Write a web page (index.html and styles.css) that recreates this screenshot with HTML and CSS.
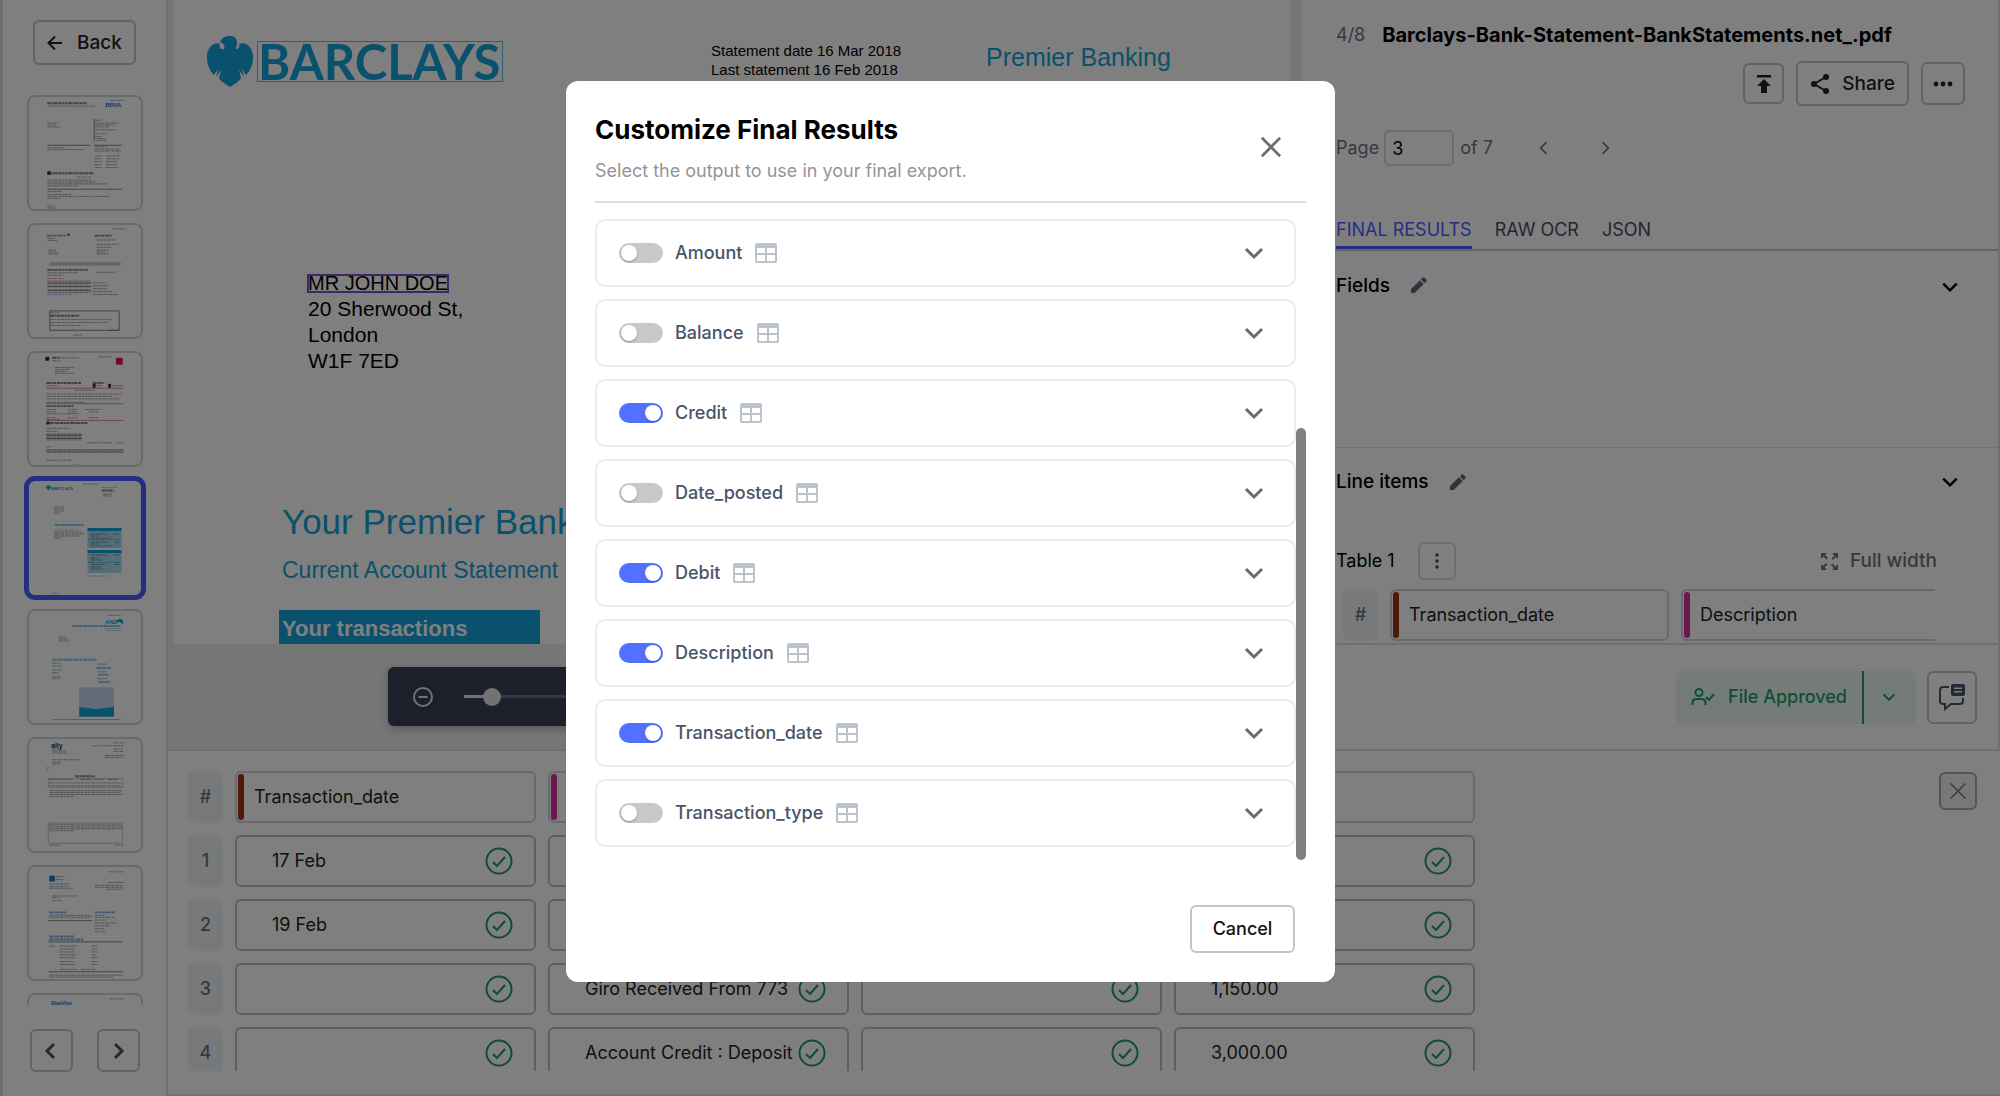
FILE: index.html
```html
<!DOCTYPE html>
<html lang="en">

<head>
    <meta charset="UTF-8">
    <meta name="viewport" content="width=device-width, initial-scale=1.0">
    <title>Customize Final Results</title>

    <link rel="stylesheet" href="styles.css">
</head>

<body>

    <!-- Shared icons -->
    <svg class="sprite" aria-hidden="true">
        <symbol id="i-left" viewBox="0 0 24 24"><path d="M15 5l-7 7 7 7" /></symbol>
        <symbol id="i-right" viewBox="0 0 24 24"><path d="M9 5l7 7-7 7" /></symbol>
        <symbol id="i-down" viewBox="0 0 24 24"><path d="M4 8l8 8 8-8" /></symbol>
        <symbol id="i-close" viewBox="0 0 24 24"><path d="M2 2l20 20M22 2L2 22" /></symbol>
        <symbol id="i-check" viewBox="0 0 28 28"><circle cx="14" cy="14" r="12.5" /><path d="M8 15l4 4 8-9" /></symbol>
        <symbol id="i-table" viewBox="0 0 22 20"><path fill-rule="evenodd" d="M2 0h18a2 2 0 0 1 2 2v16a2 2 0 0 1-2 2H2a2 2 0 0 1-2-2V2a2 2 0 0 1 2-2zM2 5v5h8V5zM12 5v5h8V5zM2 12v6h8v-6zM12 12v6h8v-6z" /></symbol>
        <symbol id="i-pencil" viewBox="0 0 18 18"><path d="M1 17v-4L10.500 3.500l4 4L5 17zM11.500 2.500l2-2q.8-.6 1.600 0l2.400 2.400q.6.800 0 1.600l-2 2z" /></symbol>
    </svg>

    <div class="app">

        <aside class="sidebar">
            <button class="btn back">
                <svg class="stroke" width="16" height="16" viewBox="0 0 16 16"><path d="M15 8H2M8 1.500L1.500 8 8 14.500" /></svg>
                Back
            </button>

            <div class="thumbs">
                <div class="thumb">
                    <svg viewBox="0 0 116 116">
                        <path class="t bold" d="M19 6.500h41M19 79h48" />
                        <text class="brand blue" x="79" y="10" font-size="6">BBVA</text>
                        <path class="t" d="M84 3.500h14M19 9.500h50M19 27h10M19 29h9M19 31h13M68 24h8M68 27h25M69 29h20M68 31h15M69 34h21M68 38h12M68 41h8M70 43h9M70 45h11M19 52.500h17M19 54.500h38M68 51.500h12M68 54h26M68 56h27M68 61h8M80 61h14M68 64h7M80 64h13M68 67h8M80 67h12M68 70h7M80 70h12M68 73h8M80 73h12M50 83h14M19 86h46M19 88h50M19 90h62M19 92h32M19 98h15M19 101h24M19 103h64M19 105h13M19 113h7M19 115h9" />
                        <path class="line" d="M67.500 23v23M19 50h44M67 50h29M19 95.500h77" />
                        <rect x="19" y="77" width="3.500" height="3.500" />
                    </svg>
                </div>
                <div class="thumb">
                    <svg viewBox="0 0 116 116">
                        <path class="t bold blue" d="M18 11h20" />
                        <path class="red" d="M39 9h4l-2 3z" />
                        <path class="t bold" d="M68 11h18M19 46.500h42M22 94h30" />
                        <path class="t" d="M86 4h13M19 14h8M19 16h11M20 26h8M20 28h9M20 30h11M70 15.500h20M70 20h23M70 23h15M70 26h13M70 28h9M70 30h12M19 49.500h32M69 49h20M19 52h16M19 58h45M19 61h45M19 64h45M19 67h45M19 70h45M66 60h13M66 63h17M66 66h15M66 69h20M66 72h26M22 91h10M22 98h64M22 101h60M22 104h32M82 109h12M46 114h9" />
                        <path class="t red" d="M19 55.500h18" />
                        <path class="t blue" d="M19 72h25" />
                        <path class="line" d="M19 60h45M19 63.500h45M19 68h45M21.500 89h72v20h-72z" />
                        <rect class="shade" x="21" y="38.500" width="74" height="3.500" />
                    </svg>
                </div>
                <div class="thumb">
                    <svg viewBox="0 0 116 116">
                        <rect x="17" y="4" width="4" height="4" />
                        <rect class="redfill" x="90" y="5" width="7" height="7" />
                        <path class="t bold" d="M24 5h8M18 31h36M66 31h12M18 55h28M21 72.500h40" />
                        <path class="t" d="M33 5h19M24 8h8M72 4h14M27 15h20M27 17h15M27 19h12M27 21h20M18 34h13M70 34h6M86 34h12M48 38.500h20M18 42.500h78M18 45h68M18 47.500h76M18 51h40M18 58.500h10M40 58.500h10M58 58.500h16M18 61h10M40 61h10M62 61h10M18 63h34M18 67h10M40 67h10M62 67h10M18 69h14M18 78h24M18 81h12M18 84h36M18 86h36M18 88h36M18 90h36M60 93h26M90 93h8M18 97h5M18 100h80M18 103h80M18 111h26M46 116h8" />
                        <path class="line red" d="M18 36.500h80M18 52.500h80M18 69.800h80" />
                        <path class="line" d="M18 85h37M18 88.500h37M18 101.500h80" />
                        <rect x="66" y="32" width="3" height="4" /><rect x="82" y="32" width="3" height="4" /><rect x="18" y="71" width="3" height="3" />
                    </svg>
                </div>
                <div class="thumb selected">
                    <svg viewBox="0 0 116 116">
                        <circle class="cyanfill" cx="21.500" cy="7.500" r="2.200" />
                        <text class="brand cyan" x="24" y="9.500" font-size="4">BARCLAYS</text>
                        <path class="t" d="M56 4h16M76 14h9M76 16h8M27 27h10M27 29h11M27 31h10M27 33h6M27 52h28M27 54h30M27 56h26M27 58h8" />
                        <path class="t bold" d="M75 10.500h12" />
                        <path class="t cyan" d="M75 7.500h15M26 50h25M61 96h20M25 113h7" />
                        <path class="t bold cyan" d="M28 45h29" />
                        <path class="cyantint" d="M60.500 48h34v20h-34zM60.500 70h34v23h-34z" />
                        <path class="cyanfill" d="M60.500 48h34v3h-34zM60.500 70h34v3h-34zM60.500 59.500h34v.6h-34zM60.500 82h34v.6h-34z" />
                        <path class="t" d="M64 54h16M86 54h7M64 56h8M64 58h20M64 62h17M88 62h5M64 64h8M64 66h20M64 75h18M87 75h6M64 78h8M64 80h12M64 84.500h14M88 84.500h5M64 87h10M64 89h12" />
                    </svg>
                </div>
                <div class="thumb">
                    <svg viewBox="0 0 116 116">
                        <text class="brand cyan" x="79" y="13" font-size="6">ANZ</text>
                        <path class="cyanfill" d="M91 13q-1-4 3-5 5 1 3 6l-3-3z" />
                        <path class="t" d="M82 4.500h13M31 27h7M31 29h9M31 31h11M24 54h8M24 57h9M24 61h11M24 64h7M24 68h9M24 70h8M71 55h10M71 63h9M71 70h10" />
                        <path class="t bold cyan" d="M45 15.500h50M24 50.500h46M70 59h15M72 66h11M72 73.500h12" />
                        <path class="t cyan" d="M78 18h17M80 20h15" />
                        <rect class="sky" x="52" y="79" width="36" height="22" />
                        <path class="cyanfill" d="M52 99.500l18 2 18-2v10H52z" />
                        <path class="line cyan" d="M24 112.500h71" />
                    </svg>
                </div>
                <div class="thumb">
                    <svg viewBox="0 0 116 116">
                        <text class="brand" x="23" y="9" font-size="7">ally</text>
                        <path class="t" d="M87 4h12M66 7h32M24 10.500h10M24 12.500h14M24 14.500h15M88 10.500h9M87 13h11M79 17h20M78 19h20M24 21.500h28M24 24h9M24 26h8M21 42h24M53 42h12M68 42h9M82 42h10M21 45.500h74M21 48.500h74M21 53.500h76M21 55.500h74M21 57.500h77M21 59.500h26M21 89h75M21 91h76M21 93h75M21 95h26M21 110h12M88 110h10" />
                        <path class="t bold" d="M48 38.500h20" />
                        <path class="line faint" d="M20 41h77v9H20zM20 87h77v21H20zM19.500 28v5" />
                    </svg>
                </div>
                <div class="thumb">
                    <svg viewBox="0 0 116 116">
                        <rect class="bluefill" x="21" y="9" width="6" height="6" />
                        <path class="t" d="M83 5h15M28 10h9M28 13h8M21 17.500h22M21 20h20M21 22h24M82 16h16M68 19h30M68 21h29M80 23h18M24 30h26M24 32h8M24 35h10M21 50h44M21 52h44M68 50h10M68 52h22M68 55h12M68 58h23M68 61h15M68 64h11M68 67h12M21 82h6M32 82h18M65 82h6M32 85h15M65 85h6M32 88h16M65 88h6M32 91h17M65 91h5M32 94h16M65 94h6M32 98h14M65 98h6M32 101h16M65 101h6M32 106h18M54 106h15M21 112h76M21 114h66" />
                        <path class="t bold blue" d="M21 47h18M68 47h21M21 72h26M21 75h35" />
                        <path class="line" d="M20 55.500h45M20 77.500h77M20 108.500h77" />
                    </svg>
                </div>
                <div class="thumb">
                    <svg viewBox="0 0 116 116">
                        <path class="t" d="M83 4h15" />
                        <text class="brand blue" x="23" y="10" font-size="5">BlueVine</text>
                    </svg>
                </div>
            </div>

            <div class="pager">
                <button class="btn" aria-label="Previous files"><svg class="stroke slate" width="24" height="24"><use href="#i-left" /></svg></button>
                <button class="btn" aria-label="Next files"><svg class="stroke slate" width="24" height="24"><use href="#i-right" /></svg></button>
            </div>
        </aside>

        <div class="workspace">

            <div class="top">

                <main class="viewer">
                    <div class="page">
                        <div class="page-head">
                            <div class="bank">
                                <svg width="46" height="52" viewBox="0 0 46 52"><path d="M22 0c5-.5 8 2 8 7 0 2-1 4-1 6 3-.5 4-2 3-5 7-3 13 3 14 11 .5 8-2 15-7 20l-4-6 2 8-5-7 2 8q-1 3-11 9-10-6-11-9l2-8-5 7 2-8-4 6C2 34-.5 27 0 19 1 11 7 5 13 8c-1 4 1 6 4 5 1-3 0-5-2-6l-2-1q2-6 9-6z" /></svg>
                                <span class="bank-name">BARCLAYS</span>
                            </div>
                            <p class="dates">Statement date 16 Mar 2018<br>Last statement 16 Feb 2018</p>
                            <p class="tier">Premier Banking</p>
                        </div>
                        <p class="address"><span class="marked">MR JOHN DOE</span><br>20 Sherwood St,<br>London<br>W1F 7ED</p>
                        <div class="account">
                            <h1>Your Premier Bank</h1>
                            <h2>Current Account Statement</h2>
                            <h3>Your transactions</h3>
                        </div>
                    </div>
                    <div class="viewer-foot">
                        <div class="zoombar">
                            <button class="plain" aria-label="Zoom out"><svg class="stroke" width="22" height="22" viewBox="0 0 22 22"><circle cx="11" cy="11" r="9" /><path d="M6.500 11h9" /></svg></button>
                            <input class="zoom" type="range" min="0" max="100" value="5" aria-label="Zoom">
                        </div>
                    </div>
                </main>

                <section class="panel">
                    <div class="panel-body">
                        <div class="file-name"><span>4/8</span><strong>Barclays-Bank-Statement-BankStatements.net_.pdf</strong></div>
                        <div class="actions">
                            <button class="btn up" aria-label="Upload"><svg width="18" height="20" viewBox="0 0 18 20"><path d="M2 1h14v2.500H2zM9 5l7 7h-4v7H6v-7H2z" /></svg></button>
                            <button class="btn share">
                                <svg width="20" height="22" viewBox="0 0 20 22"><circle cx="4" cy="11" r="3" /><circle cx="16" cy="4" r="3" /><circle cx="16" cy="18" r="3" /><path class="rod" d="M16 4L4 11l12 7" /></svg>
                                Share
                            </button>
                            <button class="btn more" aria-label="More"><svg width="20" height="6" viewBox="0 0 20 6"><circle cx="3" cy="3" r="2.400" /><circle cx="10" cy="3" r="2.400" /><circle cx="17" cy="3" r="2.400" /></svg></button>
                        </div>
                        <div class="page-nav">
                            <label for="page">Page</label>
                            <input id="page" type="text" value="3">
                            <span>of 7</span>
                            <button class="plain prev" aria-label="Previous page"><svg class="stroke" width="20" height="20"><use href="#i-left" /></svg></button>
                            <button class="plain next" aria-label="Next page"><svg class="stroke" width="20" height="20"><use href="#i-right" /></svg></button>
                        </div>
                        <nav class="tabs">
                            <a class="active" href="#final">FINAL RESULTS</a>
                            <a href="#raw">RAW OCR</a>
                            <a href="#json">JSON</a>
                        </nav>
                        <div class="group fields">
                            <h4>Fields</h4>
                            <svg class="pencil" width="17" height="17"><use href="#i-pencil" /></svg>
                            <button class="plain" aria-label="Toggle fields"><svg class="stroke" width="20" height="20"><use href="#i-down" /></svg></button>
                        </div>
                        <div class="group items">
                            <h4>Line items</h4>
                            <svg class="pencil" width="17" height="17"><use href="#i-pencil" /></svg>
                            <button class="plain" aria-label="Toggle line items"><svg class="stroke" width="20" height="20"><use href="#i-down" /></svg></button>
                        </div>
                        <div class="table-bar">
                            <span>Table 1</span>
                            <button class="btn dots" aria-label="Table options"><svg width="4" height="16" viewBox="0 0 4 16"><circle cx="2" cy="2" r="1.700" /><circle cx="2" cy="8" r="1.700" /><circle cx="2" cy="14" r="1.700" /></svg></button>
                            <button class="plain full">
                                <svg width="17" height="17" viewBox="0 0 17 17"><path d="M0 0h6L4 2l3 3-1.500 1.500-3-3L0 6zM17 0v6l-2-2-3 3-1.500-1.500 3-3L11 0zM0 17v-6l2 2 3-3 1.500 1.500-3 3L6 17zM17 17h-6l2-2-3-3 1.500-1.500 3 3L17 11z" /></svg>
                                Full width
                            </button>
                        </div>
                        <div class="preview">
                            <table class="grid">
                                <colgroup><col class="c-num"><col class="c-prev"><col class="c-prev"></colgroup>
                                <tr>
                                    <th class="num">#</th>
                                    <th><div class="cell rust">Transaction_date</div></th>
                                    <th><div class="cell pink">Description</div></th>
                                </tr>
                            </table>
                        </div>
                    </div>
                    <div class="panel-foot">
                        <div class="approved">
                            <button class="plain">
                                <svg class="stroke" width="24" height="18" viewBox="0 0 24 18"><circle cx="8" cy="4.500" r="3.500" /><path d="M1.500 17v-2q0-4 4-4h5q4 0 4 4v2M15 9l3 3 5-6" /></svg>
                                File Approved
                            </button>
                            <button class="plain drop" aria-label="Change status"><svg class="stroke" width="16" height="16"><use href="#i-down" /></svg></button>
                        </div>
                        <button class="btn comment" aria-label="Comments">
                            <svg class="slate" width="28" height="28" viewBox="0 0 28 28"><path class="bubble" d="M11 4H5Q2 4 2 7v11q0 3 3 3h2v5l6-5h9q3 0 3-3v-3" /><path fill-rule="evenodd" d="M15 1h10q2 0 2 2v8q0 2-2 2H15q-2 0-2-2V3q0-2 2-2zM16 4.500V6h8V4.500zM16 8v1.500h8V8z" /></svg>
                        </button>
                    </div>
                </section>

            </div>

            <section class="sheet">
                <div class="sheet-table">
                    <table class="grid wide">
                        <colgroup><col class="c-num"><col><col><col><col></colgroup>
                        <tr>
                            <th class="num">#</th>
                            <th><div class="cell rust">Transaction_date</div></th>
                            <th><div class="cell pink"></div></th>
                            <th><div class="cell"></div></th>
                            <th><div class="cell"></div></th>
                        </tr>
                        <tr>
                            <th class="num">1</th>
                            <td><div class="cell"><span>17 Feb</span><svg class="ok"><use href="#i-check" /></svg></div></td>
                            <td><div class="cell"></div></td>
                            <td><div class="cell"></div></td>
                            <td><div class="cell"><span></span><svg class="ok"><use href="#i-check" /></svg></div></td>
                        </tr>
                        <tr>
                            <th class="num">2</th>
                            <td><div class="cell"><span>19 Feb</span><svg class="ok"><use href="#i-check" /></svg></div></td>
                            <td><div class="cell"></div></td>
                            <td><div class="cell"></div></td>
                            <td><div class="cell"><span></span><svg class="ok"><use href="#i-check" /></svg></div></td>
                        </tr>
                        <tr>
                            <th class="num">3</th>
                            <td><div class="cell"><span></span><svg class="ok"><use href="#i-check" /></svg></div></td>
                            <td><div class="cell"><span>Giro Received From 773</span><svg class="ok"><use href="#i-check" /></svg></div></td>
                            <td><div class="cell"><span></span><svg class="ok"><use href="#i-check" /></svg></div></td>
                            <td><div class="cell"><span>1,150.00</span><svg class="ok"><use href="#i-check" /></svg></div></td>
                        </tr>
                        <tr>
                            <th class="num">4</th>
                            <td><div class="cell"><span></span><svg class="ok"><use href="#i-check" /></svg></div></td>
                            <td><div class="cell"><span>Account Credit : Deposit</span><svg class="ok"><use href="#i-check" /></svg></div></td>
                            <td><div class="cell"><span></span><svg class="ok"><use href="#i-check" /></svg></div></td>
                            <td><div class="cell"><span>3,000.00</span><svg class="ok"><use href="#i-check" /></svg></div></td>
                        </tr>
                    </table>
                </div>
                <button class="btn shut" aria-label="Close table"><svg class="stroke" width="18" height="18"><use href="#i-close" /></svg></button>
            </section>

        </div>
    </div>

    <div class="overlay">
        <div class="modal" role="dialog" aria-labelledby="modal-title">
            <div class="modal-head">
                <div>
                    <h2 id="modal-title">Customize Final Results</h2>
                    <p>Select the output to use in your final export.</p>
                </div>
                <button class="plain" aria-label="Close"><svg class="stroke" width="22" height="22"><use href="#i-close" /></svg></button>
            </div>

            <div class="modal-body">
                <div class="list">
                    <div class="option">
                        <input type="checkbox" id="amount"><label for="amount">Amount</label>
                        <svg class="kind"><use href="#i-table" /></svg>
                        <button class="plain" aria-label="Expand Amount"><svg class="stroke" width="24" height="24"><use href="#i-down" /></svg></button>
                    </div>
                    <div class="option">
                        <input type="checkbox" id="balance"><label for="balance">Balance</label>
                        <svg class="kind"><use href="#i-table" /></svg>
                        <button class="plain" aria-label="Expand Balance"><svg class="stroke" width="24" height="24"><use href="#i-down" /></svg></button>
                    </div>
                    <div class="option">
                        <input type="checkbox" id="credit" checked><label for="credit">Credit</label>
                        <svg class="kind"><use href="#i-table" /></svg>
                        <button class="plain" aria-label="Expand Credit"><svg class="stroke" width="24" height="24"><use href="#i-down" /></svg></button>
                    </div>
                    <div class="option">
                        <input type="checkbox" id="date_posted"><label for="date_posted">Date_posted</label>
                        <svg class="kind"><use href="#i-table" /></svg>
                        <button class="plain" aria-label="Expand Date_posted"><svg class="stroke" width="24" height="24"><use href="#i-down" /></svg></button>
                    </div>
                    <div class="option">
                        <input type="checkbox" id="debit" checked><label for="debit">Debit</label>
                        <svg class="kind"><use href="#i-table" /></svg>
                        <button class="plain" aria-label="Expand Debit"><svg class="stroke" width="24" height="24"><use href="#i-down" /></svg></button>
                    </div>
                    <div class="option">
                        <input type="checkbox" id="description" checked><label for="description">Description</label>
                        <svg class="kind"><use href="#i-table" /></svg>
                        <button class="plain" aria-label="Expand Description"><svg class="stroke" width="24" height="24"><use href="#i-down" /></svg></button>
                    </div>
                    <div class="option">
                        <input type="checkbox" id="transaction_date" checked><label for="transaction_date">Transaction_date</label>
                        <svg class="kind"><use href="#i-table" /></svg>
                        <button class="plain" aria-label="Expand Transaction_date"><svg class="stroke" width="24" height="24"><use href="#i-down" /></svg></button>
                    </div>
                    <div class="option">
                        <input type="checkbox" id="transaction_type"><label for="transaction_type">Transaction_type</label>
                        <svg class="kind"><use href="#i-table" /></svg>
                        <button class="plain" aria-label="Expand Transaction_type"><svg class="stroke" width="24" height="24"><use href="#i-down" /></svg></button>
                    </div>
                </div>
                <div class="scrollbar"></div>
            </div>

            <div class="modal-foot">
                <button class="btn">Cancel</button>
            </div>
        </div>
    </div>

</body>

</html>
```

FILE: styles.css
```css
* {
    margin: 0;
    padding: 0;
    box-sizing: border-box;
}

body {
    height: 100vh;
    overflow: hidden;
    font-family: Inter, "Liberation Sans", sans-serif;
    font-size: 18px;
    line-height: 24px;
    color: #222;
    background-color: white;
}

button,
input {
    font: inherit;
    color: inherit;
}

svg {
    flex: none;
    fill: currentColor;
}

.sprite {
    position: absolute;
    width: 0;
    height: 0;
}

.stroke {
    fill: none;
    stroke: currentColor;
    stroke-width: 2;
}

.slate {
    color: #475569;
}

.btn {
    display: flex;
    align-items: center;
    justify-content: center;
    background: none;
    border: 2px solid #c4c4c8;
    border-radius: 6px;
    font-weight: 500;
    cursor: pointer;
}

.plain {
    display: flex;
    align-items: center;
    background: none;
    border: none;
    cursor: pointer;
}

.app {
    display: flex;
    height: 100vh;
}

/* Sidebar */

.sidebar {
    width: 168px;
    flex: none;
    display: flex;
    flex-direction: column;
    align-items: center;
    padding: 20px 0 24px;
    border-left: 3px solid #dcdcdc;
    border-right: 2px solid #dedede;
}

.back {
    width: 103px;
    height: 45px;
    gap: 14px;
    font-size: 19px;
}

.thumbs {
    flex: 1;
    min-height: 0;
    overflow: hidden;
    display: flex;
    flex-direction: column;
    gap: 12px;
    width: 124px;
    margin: 27px 0 24px;
    padding: 3px 4px 0;
}

.thumb {
    flex: none;
    height: 116px;
    border: 2px solid #d4d4d4;
    border-radius: 8px;
    overflow: hidden;
}

.thumb.selected {
    height: 118px;
    border: none;
    outline: 5px solid #4c5fff;
    outline-offset: -2px;
}

.thumb svg {
    display: block;
    width: 100%;
    height: 100%;
    color: #333;
}

.thumb .t {
    fill: none;
    stroke: currentColor;
    stroke-width: 1;
    stroke-dasharray: 4 .6 2 .5 3 .7;
    opacity: .45;
}

.thumb .bold {
    stroke-width: 2;
    opacity: .6;
}

.thumb .line {
    fill: none;
    stroke: currentColor;
    stroke-width: .6;
}

.thumb .faint {
    stroke: #999;
}

.thumb .brand {
    font-family: "Liberation Sans", sans-serif;
    font-weight: bold;
}

.thumb .blue {
    color: #2a6fd0;
    fill: currentColor;
}

.thumb .red {
    color: #d0304f;
    fill: currentColor;
}

.thumb .cyan {
    color: #12a3d8;
    fill: currentColor;
}

.bluefill {
    fill: #1478c8;
}

.redfill {
    fill: #e0144c;
}

.cyanfill {
    fill: #12a3d8;
}

.cyantint {
    fill: #a8daf0;
}

.shade {
    fill: #c4c8dc;
}

.sky {
    fill: #c3d9ec;
}

.pager {
    display: flex;
    gap: 24px;
}

.pager .btn {
    width: 43px;
    height: 43px;
}

.pager .stroke {
    stroke-width: 3;
}

/* Document viewer */

.workspace {
    flex: 1;
    min-width: 0;
    display: flex;
    flex-direction: column;
}

.top {
    flex: 1;
    min-height: 0;
    display: flex;
}

.viewer {
    flex: 1;
    min-width: 0;
    display: flex;
    flex-direction: column;
    background-color: #ececec;
}

.page {
    flex: 1;
    min-height: 0;
    overflow: hidden;
    margin: 0 12px 0 6px;
    background-color: white;
    font-family: "Liberation Sans", sans-serif;
    color: black;
}

.page-head {
    display: flex;
    align-items: flex-start;
    padding: 36px 0 0 33px;
    color: #12a3d8;
}

.bank {
    display: flex;
    gap: 4px;
    width: 504px;
}

.bank-name {
    height: 41px;
    margin-top: 5px;
    padding-right: 2px;
    border: 1px solid #5cc0e6;
    font-family: Lato, sans-serif;
    font-size: 49px;
    font-weight: bold;
    line-height: 38px;
}

.dates {
    width: 275px;
    margin-top: 5px;
    font-size: 15px;
    line-height: 19px;
    color: black;
}

.tier {
    margin-top: 5px;
    font-size: 25px;
    line-height: 32px;
}

.address {
    margin: 182px 0 0 134px;
    font-size: 21px;
    line-height: 26px;
}

.marked {
    display: inline-block;
    height: 17px;
    font-size: 20px;
    line-height: 17px;
    outline: 2px solid #7c4fd0;
    outline-offset: -1px;
}

.account {
    padding: 120px 0 0 105px;
    color: #12a3d8;
}

.account h1 {
    margin-left: 3px;
    font-size: 35px;
    font-weight: normal;
    line-height: 56px;
}

.account h2 {
    margin-left: 3px;
    font-size: 23px;
    font-weight: normal;
    line-height: 40px;
}

.account h3 {
    width: 261px;
    margin-top: 20px;
    padding: 2px 3px;
    font-size: 22px;
    line-height: 34px;
    color: white;
    background-color: #12a3d8;
}

.viewer-foot {
    height: 105px;
    display: flex;
    align-items: center;
    justify-content: center;
}

.zoombar {
    width: 694px;
    height: 59px;
    display: flex;
    align-items: center;
    gap: 30px;
    padding: 0 24px;
    border-radius: 6px;
    color: #e4e4e4;
    background-color: #364156;
    box-shadow: 0 3px 8px rgba(0, 0, 0, .25);
}

.zoom {
    appearance: none;
    width: 400px;
    height: 3px;
    background: linear-gradient(to right, #e4e4e4 30px, #667085 30px);
}

.zoom::-webkit-slider-thumb {
    appearance: none;
    width: 18px;
    height: 18px;
    border-radius: 50%;
    background-color: #e4e4e4;
}

/* Results panel */

.panel {
    width: 698px;
    flex: none;
    display: flex;
    flex-direction: column;
    border-right: 2px solid #dedede;
}

.panel-body {
    flex: 1;
    min-height: 0;
    overflow: hidden;
}

.file-name {
    display: flex;
    gap: 17px;
    padding: 23px 0 0 34px;
    color: #6b7280;
}

.file-name strong {
    font-size: 20px;
    font-weight: 700;
    color: black;
}

.actions {
    display: flex;
    justify-content: flex-end;
    align-items: center;
    gap: 12px;
    padding: 14px 33px 0 0;
}

.up {
    width: 41px;
    height: 41px;
}

.share {
    width: 113px;
    height: 45px;
    gap: 12px;
    font-size: 19px;
}

.rod {
    fill: none;
    stroke: currentColor;
    stroke-width: 2;
}

.more {
    width: 44px;
    height: 43px;
}

.page-nav {
    display: flex;
    align-items: center;
    padding: 24px 0 0 34px;
    color: #6b7280;
}

.page-nav input {
    width: 70px;
    height: 36px;
    margin: 0 6px 0 5px;
    padding-left: 6px;
    border: 2px solid #dadada;
    border-radius: 5px;
    background: none;
    color: black;
}

.prev,
.next {
    margin-left: 41px;
}

.tabs {
    display: flex;
    gap: 23px;
    margin-top: 44px;
    padding-left: 34px;
    border-bottom: 2px solid #c8c8cc;
}

.tabs a {
    height: 39px;
    padding-top: 8px;
    color: #4a4d5c;
    text-decoration: none;
}

.tabs .active {
    color: #4c5fff;
    border-bottom: 3px solid #4c5fff;
}

.group {
    display: flex;
    align-items: center;
    gap: 20px;
    padding: 0 38px 0 34px;
    color: black;
}

.group h4 {
    font-size: 19px;
    font-weight: 500;
}

.group .plain {
    margin-left: auto;
}

.group .stroke {
    stroke-width: 3;
}

.fields {
    height: 197px;
    padding-top: 23px;
    align-items: flex-start;
    border-bottom: 1px solid #e0e0e0;
}

.fields .pencil,
.fields .plain {
    margin-top: 3px;
}

.items {
    height: 68px;
}

.pencil {
    color: #5a6880;
}

.table-bar {
    display: flex;
    align-items: center;
    gap: 23px;
    padding: 26px 61px 0 34px;
    color: black;
}

.dots {
    width: 38px;
    height: 38px;
    border-color: #dadada;
    color: #444;
}

.full {
    gap: 12px;
    margin-left: auto;
    font-size: 19px;
    font-weight: 500;
    color: #6b7280;
}

.preview {
    margin: -3px 63px 0 29px;
    overflow: hidden;
}

.panel-foot {
    height: 106px;
    display: flex;
    align-items: center;
    justify-content: flex-end;
    gap: 11px;
    padding-right: 21px;
    border-top: 2px solid #dcdcdc;
}

.approved {
    display: flex;
    height: 53px;
    border-radius: 6px;
    color: #1d9c66;
    font-weight: 500;
    background-color: #eaf7f1;
}

.approved .plain {
    gap: 13px;
    padding: 0 15px;
}

.approved .drop {
    width: 54px;
    padding: 0 17px;
    border-left: 2px solid #1d9c66;
}

.drop .stroke {
    stroke-width: 3;
}

.comment {
    width: 50px;
    height: 53px;
}

.bubble {
    fill: none;
    stroke: currentColor;
    stroke-width: 2;
}

/* Data grids */

.grid {
    table-layout: fixed;
    width: 629px;
    border-spacing: 12px;
}

.grid.wide {
    width: 1311px;
}

.c-num {
    width: 35px;
}

.c-prev {
    width: 279px;
}

.grid th {
    font-weight: 400;
    text-align: left;
}

.grid .num {
    border-radius: 6px;
    text-align: center;
    font-weight: 500;
    color: #6b7280;
    background-color: #f1f3f7;
}

.cell {
    height: 52px;
    display: flex;
    align-items: center;
    justify-content: space-between;
    padding: 0 21px 0 35px;
    border: 2px solid #bebec2;
    border-radius: 6px;
}

th .cell {
    justify-content: flex-start;
    gap: 10px;
    padding: 0;
    border-color: #d0d1da;
}

th .cell::before {
    content: "";
    width: 6px;
    height: 46px;
    margin-left: 1px;
    border-radius: 3px;
}

.rust::before {
    background-color: #9c3210;
}

.pink::before {
    background-color: #d62d9c;
}

.cell span {
    flex: 1;
    margin-right: 4px;
    overflow: hidden;
    white-space: nowrap;
}

.ok {
    width: 28px;
    height: 28px;
    fill: none;
    stroke: #1d9c66;
    stroke-width: 2;
}

.sheet {
    height: 347px;
    flex: none;
    display: flex;
    justify-content: space-between;
    align-items: flex-start;
    padding: 8px 23px 23px 8px;
    border-top: 2px solid #dcdcdc;
    border-bottom: 2px solid #e4e4e4;
}

.sheet-table {
    height: 100%;
    overflow: hidden;
}

.shut {
    width: 38px;
    height: 38px;
    margin-top: 13px;
    color: #777;
    background-color: #f0f0f0;
    border-color: #aaa;
}

/* Modal */

.overlay {
    position: fixed;
    inset: 0;
    display: flex;
    justify-content: center;
    align-items: flex-start;
    padding: 81px 99px 0 0;
    background-color: rgba(0, 0, 0, .5);
}

.modal {
    width: 769px;
    padding: 29px 29px 29px;
    border-radius: 12px;
    background-color: white;
}

.modal-head {
    display: flex;
    justify-content: space-between;
    padding-bottom: 18px;
    border-bottom: 2px solid #dcdde0;
}

.modal-head h2 {
    font-size: 26px;
    font-weight: 700;
    line-height: 40px;
    color: black;
}

.modal-head p {
    margin-top: 9px;
    color: #939598;
}

.modal-head .plain {
    align-self: center;
    padding-right: 24px;
    color: #6f6f6f;
}

.modal-head .stroke {
    stroke-width: 3;
}

.modal-body {
    display: flex;
    align-items: flex-end;
    padding-top: 16px;
}

.list {
    flex: 1;
    display: flex;
    flex-direction: column;
    gap: 12px;
    padding-bottom: 13px;
}

.option {
    height: 68px;
    display: flex;
    align-items: center;
    padding: 0 28px 0 22px;
    border: 2px solid #ececf1;
    border-radius: 10px;
}

.option input {
    appearance: none;
    width: 44px;
    height: 20px;
    padding: 2px;
    border-radius: 10px;
    background-color: #c8c8c8;
}

.option input::before {
    content: "";
    display: block;
    width: 16px;
    height: 16px;
    border-radius: 50%;
    background-color: white;
    box-shadow: 0 1px 2px rgba(0, 0, 0, .3);
}

.option input:checked {
    background-color: #5271ff;
}

.option input:checked::before {
    margin-left: auto;
}

.option label {
    margin: 0 13px 0 12px;
    font-weight: 500;
    color: #475569;
}

.kind {
    width: 22px;
    height: 20px;
    color: #bcc3cf;
}

.option .plain {
    margin-left: auto;
    color: #6b6b6b;
}

.option .stroke {
    stroke-width: 3;
}

.scrollbar {
    width: 10px;
    height: 432px;
    border-radius: 5px;
    background-color: #808080;
}

.modal-foot {
    display: flex;
    justify-content: flex-end;
    padding: 45px 11px 0 0;
}

.modal-foot .btn {
    width: 105px;
    height: 48px;
    color: #111;
    border-color: #c4c4c8;
}
```
